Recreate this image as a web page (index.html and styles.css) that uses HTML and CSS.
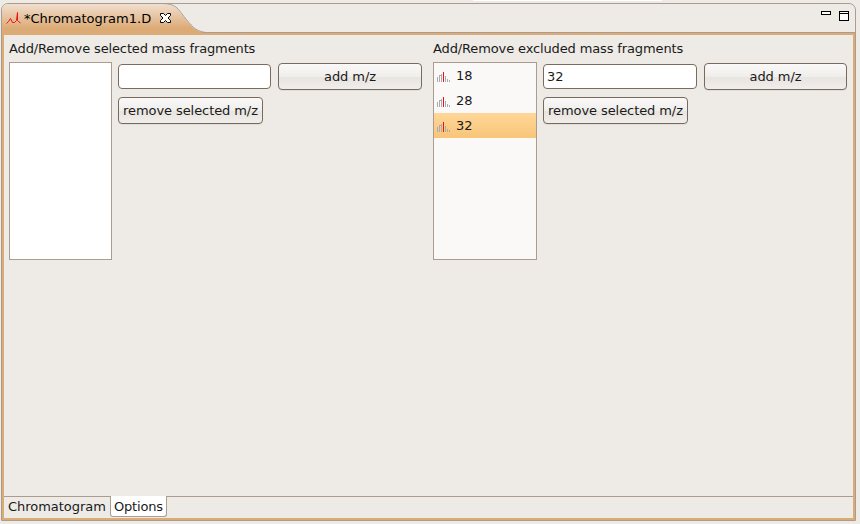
FILE: index.html
```html
<!DOCTYPE html>
<html lang="en">
<head>
<meta charset="utf-8">
<title>Chromatogram1.D</title>
<link rel="stylesheet" href="styles.css">
</head>
<body>
<svg class="defs" width="0" height="0" aria-hidden="true">
  <symbol id="spectrum" viewBox="0 0 14 11">
    <path d="M.5 11V6M2.500 11V4M4.500 11V3M8.500 11V5M10.500 11V8M12.500 11V9" stroke="#a9abb0"/>
    <path d="M3 4.500h1" stroke="#a9abb0"/>
    <path d="M6.500 11V1" stroke="#f01010"/>
  </symbol>
</svg>
<div class="edge"></div>
<main class="window">
  <header class="titlebar">
    <svg class="tab-shape" width="206" height="30" viewBox="0 0 206 30">
      <defs><linearGradient id="g" x1="0" y1="0" x2="0" y2="1"><stop offset="0" stop-color="#f1dfcf"/><stop offset=".85" stop-color="#dcaa75"/><stop offset="1" stop-color="#dcaa75"/></linearGradient></defs>
      <path d="M0 30V6Q0 1 6 1H160C174 1 176 7 182 14C189 23 193 29 204 30Z" fill="url(#g)"/>
      <path d="M160 .5C174 .5 176 6 182 13.500C189 22 193 28.500 204 29.500" fill="none" stroke="#ab9c8f"/>
    </svg>
    <div class="tab">
      <svg class="trace" width="16" height="13" viewBox="0 0 16 13"><path d="M.5 11.500L2.500 9.500L4.500 6.500L6.500 10.500H8.500L10.500 8.500L11.500 .5V8.500L12.500 9.500L14.500 11" fill="none" stroke="#f01010"/></svg>
      <span class="tab-title">*Chromatogram1.D</span>
      <svg class="close" width="11" height="10" viewBox="0 0 11 10"><path d="M.5 .5H3.500L5.500 2.500L7.500 .5H10.500V2.500L8 5L10.500 7.500V9.500H7.500L5.500 7.500L3.500 9.500H.5V7.500L3 5L.5 2.500Z" fill="#fff" stroke="#000"/></svg>
    </div>
    <div class="controls"><i class="minimize"></i><i class="maximize"></i></div>
  </header>
  <div class="content">
    <section class="panel">
      <h2>Add/Remove selected mass fragments</h2>
      <div class="row">
        <ul class="list empty"></ul>
        <div class="form">
          <div class="input"></div><button class="add">add m/z</button>
          <button class="remove">remove selected m/z</button>
        </div>
      </div>
    </section>
    <section class="panel excluded">
      <h2>Add/Remove excluded mass fragments</h2>
      <div class="row">
        <ul class="list">
          <li><svg width="14" height="11"><use href="#spectrum"/></svg>18</li>
          <li><svg width="14" height="11"><use href="#spectrum"/></svg>28</li>
          <li class="selected"><svg width="14" height="11"><use href="#spectrum"/></svg>32</li>
        </ul>
        <div class="form">
          <div class="input">32</div><button class="add">add m/z</button>
          <button class="remove">remove selected m/z</button>
        </div>
      </div>
    </section>
  </div>
  <footer class="pages"><div class="page">Chromatogram</div><div class="page active">Options</div></footer>
</main>
</body>
</html>
```
FILE: styles.css
```css
* { box-sizing: border-box; }
body { margin: 0; width: 860px; height: 524px; background: #eeebe6; color: #1a1a1a; font: 13px/16px "DejaVu Sans", sans-serif; overflow: hidden; }
.defs { position: absolute; }
.edge { width: 189px; height: 1px; margin-left: 473px; background: #fff; }
.window { display: flex; flex-direction: column; width: 855px; height: 518px; margin: 2px 0 0 1px; border: 1px solid #ab9c8f; border-radius: 7px 7px 0 0; overflow: hidden; }
.titlebar { position: relative; display: flex; justify-content: space-between; height: 29px; flex: none; border-bottom: 1px solid #ab9c8f; }
.tab-shape { position: absolute; left: 0; top: -1px; }
.tab { position: relative; display: flex; padding-left: 4px; color: #000; }
.trace { margin-top: 8px; }
.tab-title { margin: 7px 0 0 2px; width: 128px; white-space: nowrap; }
.close { margin: 9px 0 0 8px; }
.controls { display: flex; gap: 8px; padding: 7px 6px 0 0; }
.minimize { width: 10px; height: 4px; border: 1px solid #000; background: #fff; }
.maximize { width: 10px; height: 10px; border: 1px solid #000; background: linear-gradient(#fff 1px, #000 1px, #000 2px, #fff 2px); }
.content { display: grid; grid-template-columns: 424px 1fr; flex: 1; border: solid #dcaa75; border-width: 2px 2px 0; padding: 6px 5px 0; }
h2 { margin: 0; font: inherit; letter-spacing: -.13px; white-space: nowrap; height: 21px; }
.row { display: flex; gap: 6px; }
.list { width: 103px; height: 198px; margin: 0; padding: 0; border: 1px solid #ab9c8f; background: #faf9f8; list-style: none; }
.excluded .list { width: 104px; }
.list.empty { background: #fff; }
.list li { display: flex; align-items: center; height: 25px; gap: 5px; padding-left: 3px; }
.list li svg { margin-top: 2px; }
.list .selected { background: linear-gradient(#ffd799, #f8c578); }
.form { display: grid; grid-template-columns: 153px 144px; column-gap: 7px; grid-template-rows: 27px 27px; row-gap: 7px; align-content: start; padding-top: 1px; }
.excluded .form { grid-template-columns: 154px 143px; }
.input { height: 25px; margin-top: 1px; border: 1px solid #7b6b5d; border-radius: 4px; background: #fff; padding: 4px 3px; }
button { height: 27px; margin: 0; padding: 0; border: 1px solid #766a5e; border-radius: 4px; background: linear-gradient(#faf9f8, #f0eeeb 50%, #e8e4e0 52%, #f0eeeb); color: #1a1a1a; font: inherit; letter-spacing: -.08px; white-space: nowrap; box-shadow: 0 1px #e2ddd8; }
.remove { width: 145px; }
.pages { display: flex; height: 24px; flex: none; border: solid #dcaa75; border-width: 0 2px 2px; background: linear-gradient(#ab9c8f, #ab9c8f) 0 0 / 100% 1px no-repeat; }
.page { padding: 3px 4px 0; width: 106px; height: 22px; white-space: nowrap; letter-spacing: -.03px; }
.active { width: 57px; padding-left: 3px; height: 21px; letter-spacing: -.2px; border: 1px solid #ab9c8f; border-top: 0; border-radius: 0 0 3px 3px; background: #fff; }
```
